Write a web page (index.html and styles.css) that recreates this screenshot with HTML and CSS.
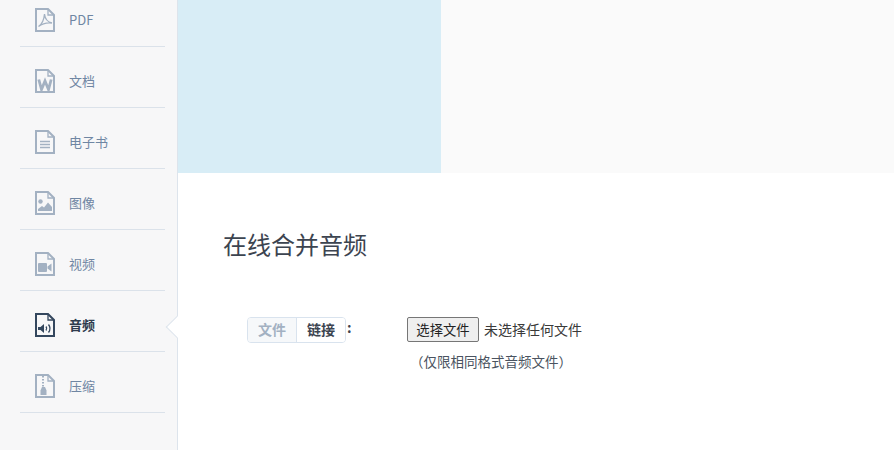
FILE: index.html
```html
<!DOCTYPE html>
<html lang="zh-CN">
<head>
<meta charset="utf-8">
<title>在线合并音频</title>
<link rel="stylesheet" href="styles.css">
</head>
<body>
<div class="page">
  <aside class="sidebar">
    <ul class="menu">
      <li class="item"><svg class="ico" viewBox="0 0 20 24"><path class="page-line" d="M1 1H13L19 7V23H1Z"/><path class="page-line thin" d="M13 1V7H19"/><path class="page-line thin" d="M3.500 18.500C6.500 16.500 9 12 9.500 6C10 11 12.500 14 17 15C13 14.500 8 15 3.500 18.500Z"/></svg><span>PDF</span></li>
      <li class="item"><svg class="ico" viewBox="0 0 20 24"><path class="page-line" d="M1 1H13L19 7V23H1Z"/><path class="page-line thin" d="M13 1V7H19"/><path class="page-line wword" d="M3.800 10.500L6.500 20.500L10 12L13.500 20.500L16.200 10.500"/></svg><span>文档</span></li>
      <li class="item"><svg class="ico" viewBox="0 0 20 24"><path class="page-line" d="M1 1H13L19 7V23H1Z"/><path class="page-line thin" d="M13 1V7H19"/><path class="page-line thin" d="M5 11.500H15M5 14.500H15M5 17.500H15"/></svg><span>电子书</span></li>
      <li class="item"><svg class="ico" viewBox="0 0 20 24"><path class="page-line" d="M1 1H13L19 7V23H1Z"/><path class="page-line thin" d="M13 1V7H19"/><circle class="fill" cx="5.500" cy="10.500" r="2.200"/><path class="fill" d="M3 20V18L7 15L9 16.500L13 11.500L17 16V20Z"/></svg><span>图像</span></li>
      <li class="item"><svg class="ico" viewBox="0 0 20 24"><path class="page-line" d="M1 1H13L19 7V23H1Z"/><path class="page-line thin" d="M13 1V7H19"/><rect class="fill" x="3" y="11" width="9" height="9" rx="1"/><path class="fill" d="M12.500 14.500L16.500 11.500V19.500L12.500 16.500Z"/></svg><span>视频</span></li>
      <li class="item active"><svg class="ico" viewBox="0 0 20 24"><path class="page-line" d="M1 1H13L19 7V23H1Z"/><path class="page-line thin" d="M13 1V7H19"/><path class="fill" d="M3 14H5.500L9 11V20L5.500 17H3Z"/><path class="page-line thin" d="M11 13.500Q12.500 15.500 11 17.500M13.500 11.500Q16.500 15.500 13.500 19.500"/></svg><span>音频</span></li>
      <li class="item"><svg class="ico" viewBox="0 0 20 24"><path class="page-line" d="M1 1H13L19 7V23H1Z"/><path class="page-line thin" d="M13 1V7H19"/><path class="page-line dots" d="M8 2V13"/><path class="fill" d="M7 13H10L11.500 16.500V21H5.500V16.500Z"/></svg><span>压缩</span></li>
    </ul>
    <div class="pointer"></div>
  </aside>
  <main class="main">
    <div class="banner"><div class="banner-ad"></div></div>
    <h1 class="title">在线合并音频</h1>
    <div class="form-row">
      <div class="tabs"><span class="tab tab-off">文件</span><span class="tab tab-on">链接</span></div>
      <span class="colon">:</span>
      <div class="file-box">
        <div class="file-line"><button class="file-btn" type="button">选择文件</button><span class="file-none">未选择任何文件</span></div>
        <p class="hint">（仅限相同格式音频文件）</p>
      </div>
    </div>
  </main>
</div>
</body>
</html>
```
FILE: styles.css
```css
* { box-sizing: border-box; }
html, body { margin: 0; padding: 0; height: 100%; overflow: hidden; background: #fff; }
body { font-family: "Noto Sans CJK SC", "Noto Sans", sans-serif; color: #3c4450; }
.page { display: flex; width: 894px; height: 450px; overflow: hidden; }
.sidebar { position: relative; flex: 0 0 178px; height: 450px; background: #f7f7f8; border-right: 1px solid #dde4ec; padding-left: 20px; }
.menu { list-style: none; margin: -14px 0 0; padding: 0; width: 145px; }
.item { display: flex; align-items: center; gap: 14px; height: 61px; padding: 8px 0 0 15px; border-bottom: 1px solid #dbe2ea; font-size: 13px; color: #6f86a3; }
.ico { flex: 0 0 20px; width: 20px; height: 24px; color: #a3b1c2; }
.item span { line-height: 18px; }
.active { color: #2f3c4e; font-weight: 700; }
.active .ico { color: #34475e; }
.page-line { fill: none; stroke: currentColor; stroke-width: 2; }
.thin { stroke-width: 1.300; }
.wword { stroke-width: 2.800; }
.dots { stroke-dasharray: 1.500 1.500; }
.fill { fill: currentColor; }
.pointer { position: absolute; left: 169px; top: 319px; width: 16px; height: 16px; background: #fff; border-left: 1px solid #dde4ec; border-bottom: 1px solid #dde4ec; transform: rotate(45deg); }
.main { flex: 1; min-width: 0; }
.banner { height: 173px; background: #fafafa; }
.banner-ad { width: 263px; height: 173px; background: #d8edf6; }
.title { margin: 53px 0 0 45px; font-size: 24px; line-height: 36px; font-weight: 400; color: #3c4450; }
.form-row { display: flex; align-items: flex-start; margin: 55px 0 0 69px; }
.tabs { display: flex; width: 99px; height: 26px; border: 1px solid #d9e3ee; border-radius: 4px; font-size: 14px; font-weight: 700; line-height: 23px; text-align: center; overflow: hidden; }
.tab { flex: 1; }
.tab-off { background: #f6f8fa; color: #a3b1c2; border-right: 1px solid #d9e3ee; }
.tab-on { background: #fff; color: #3c4450; }
.colon { width: 60px; margin-left: 1px; font-size: 14px; font-weight: 700; line-height: 20px; }
.file-line { display: flex; align-items: center; height: 25px; font-size: 14px; color: #3a3a3a; }
.file-btn { width: 72px; height: 25px; padding: 0; border: 1px solid #767676; border-radius: 2px; background: #efefef; color: #222; font: inherit; font-size: 13.333px; line-height: 21px; }
.file-none { margin-left: 5px; line-height: 22px; margin-top: -1px; }
.hint { margin: 9px 0 0 3px; font-size: 13.500px; line-height: 20px; color: #4a5360; white-space: nowrap; }
```
